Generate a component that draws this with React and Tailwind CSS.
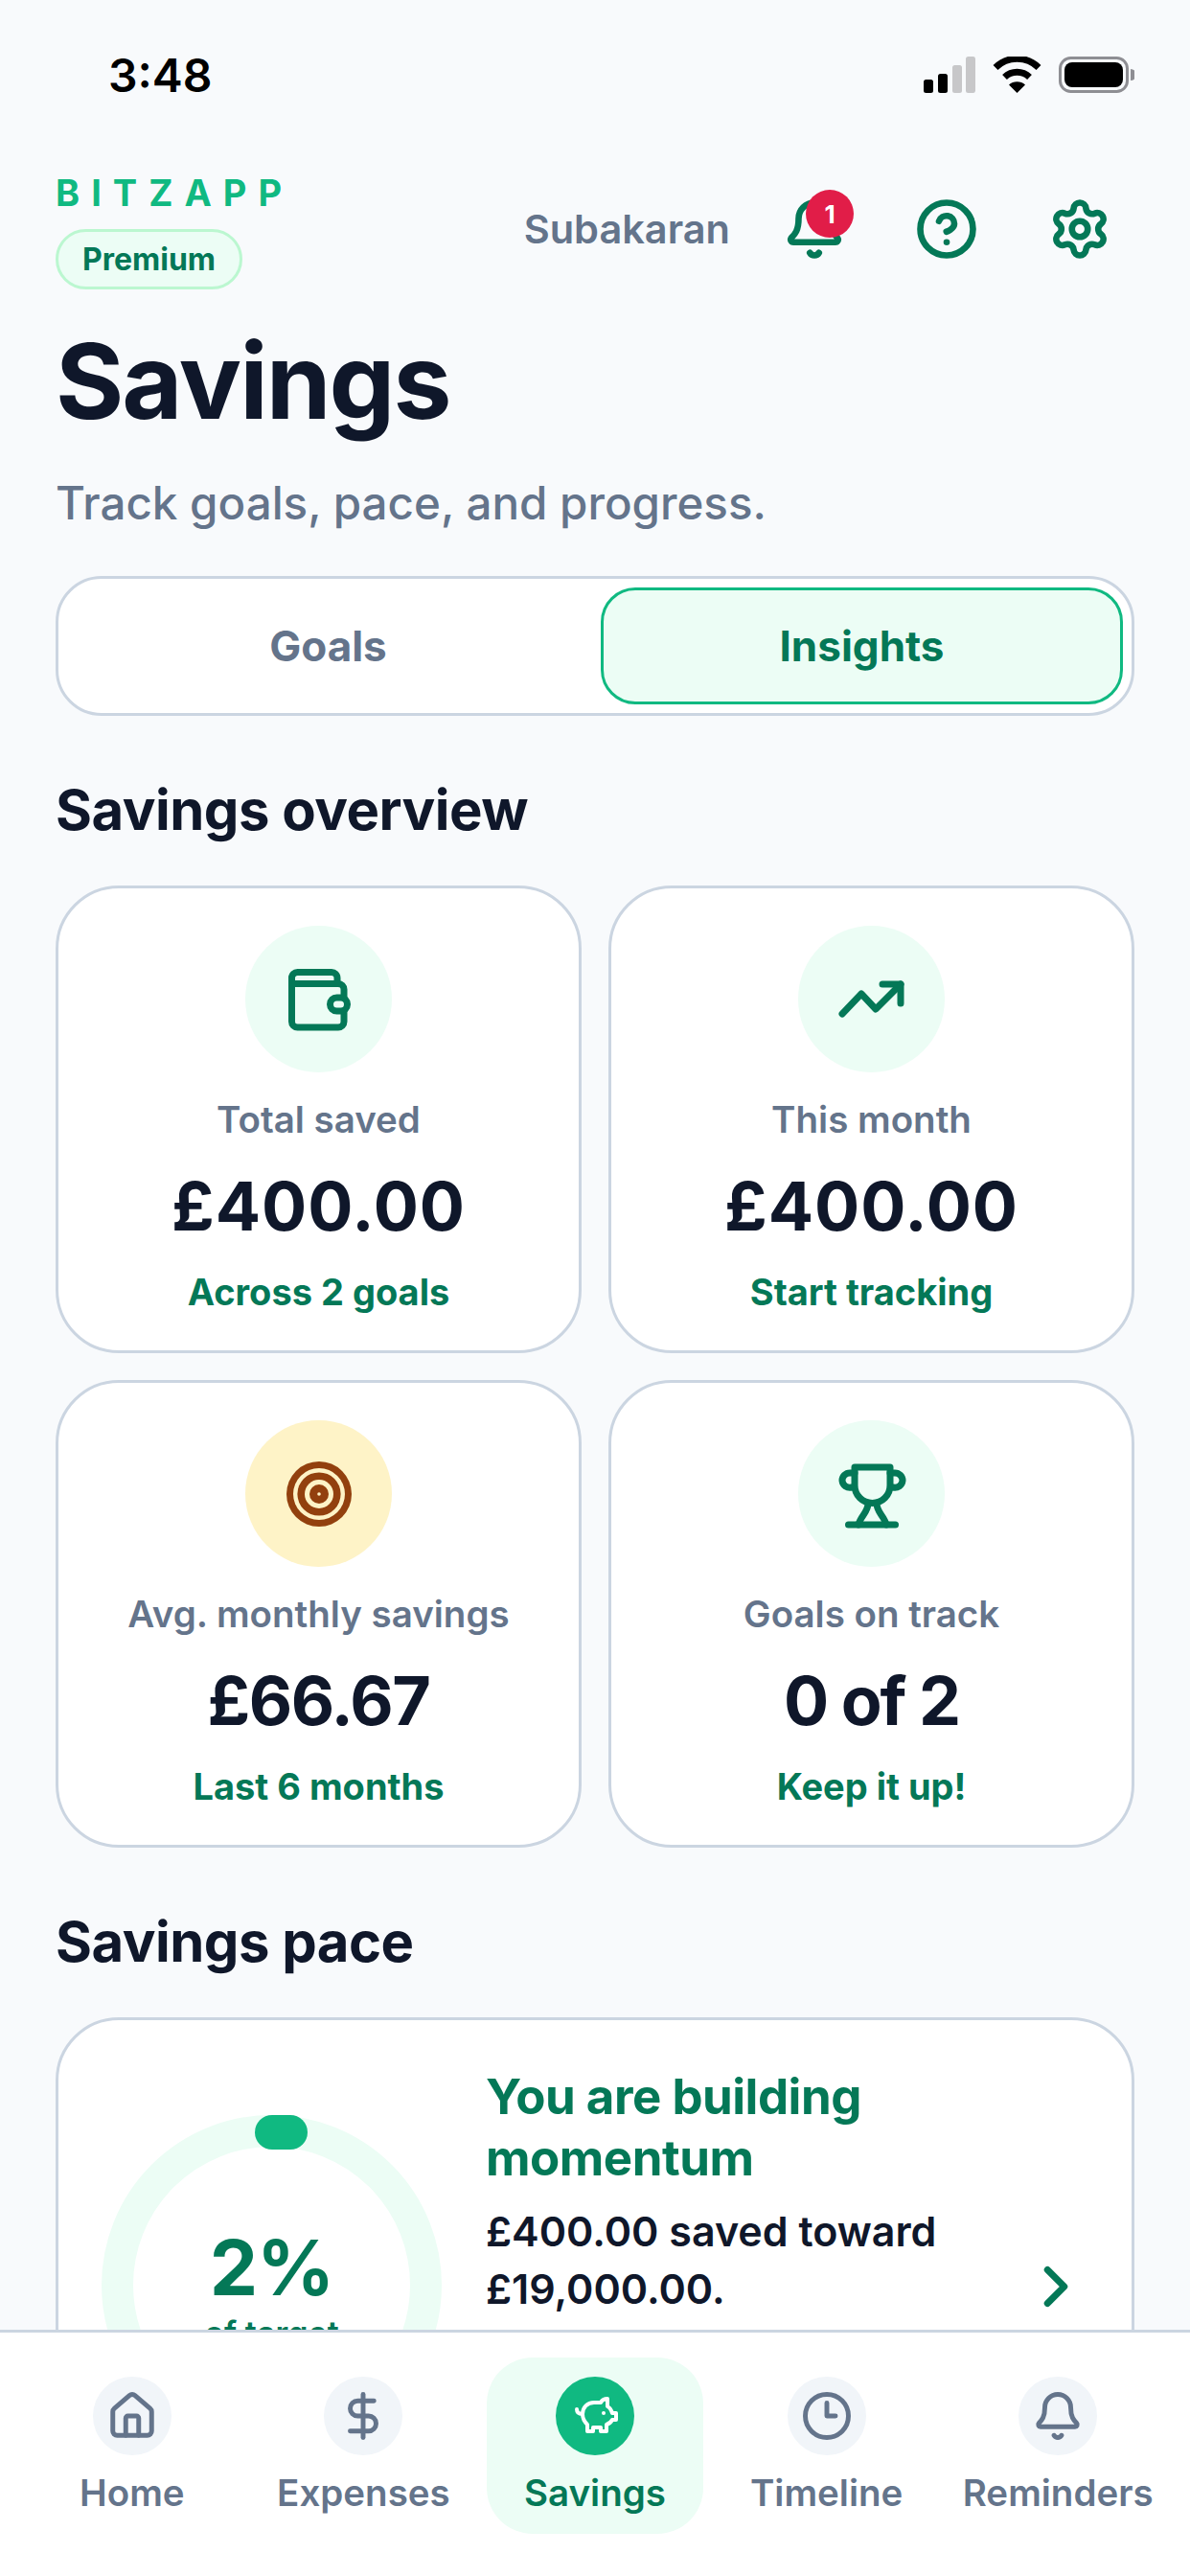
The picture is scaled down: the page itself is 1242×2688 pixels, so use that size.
import React from "react";
import { Bell, ChevronRight, CircleHelp, DollarSign, House, Settings } from "lucide-react";

const green = "#047857";

function Wallet() {
  return (
    <svg width="66" height="66" viewBox="0 0 66 66" fill="none" stroke={green} strokeWidth="7" strokeLinejoin="round" strokeLinecap="round">
      <path d="M4.5 16.5V10.5a6 6 0 0 1 6-6H46a6 6 0 0 1 6 6v6" />
      <path d="M4.5 16.5H53a6 6 0 0 1 6 6V31" />
      <path d="M59 45v11a6 6 0 0 1-6 6H10.5a6 6 0 0 1-6-6V10.5" />
      <rect x="44.5" y="31" width="18" height="14" rx="7" />
    </svg>
  );
}

function Trend() {
  return (
    <svg width="72" height="42" viewBox="0 0 72 42" fill="none" stroke={green} strokeWidth="7" strokeLinejoin="round" strokeLinecap="round">
      <path d="M5 36 25 15l15 16L66 5" />
      <path d="M47 5h19v20" />
    </svg>
  );
}

function Cup() {
  return (
    <svg width="76" height="76" viewBox="10 9 76 76" fill="none" stroke={green} strokeWidth="7" strokeLinejoin="round" strokeLinecap="round">
      <path d="M30 19h37v19a18.5 18.5 0 0 1-37 0z" />
      <path d="M30 25h-5a8 8 0 0 0-8 8 8 8 0 0 0 10 7" />
      <path d="M67 25h5a8 8 0 0 1 8 8 8 8 0 0 1-10 7" />
      <path d="M44 57c0 9-8 13-10 22" />
      <path d="M53 57c0 9 8 13 10 22" />
      <path d="M23.5 79h49" />
    </svg>
  );
}

function Target() {
  return (
    <svg width="68" height="68" viewBox="0 0 68 68">
      <circle cx="34" cy="34" r="34" fill="#92400e" />
      <circle cx="34" cy="34" r="27" fill="#fef3c7" />
      <circle cx="34" cy="34" r="22.6" fill="#92400e" />
      <circle cx="34" cy="34" r="15" fill="#fef3c7" />
      <circle cx="34" cy="34" r="10" fill="#92400e" />
      <circle cx="34" cy="34" r="1.8" fill="#fef3c7" />
    </svg>
  );
}

function Piggy() {
  return (
    <svg width="50" height="50" viewBox="25 25 50 50" fill="none" stroke="#fff" strokeWidth="4" strokeLinecap="round" strokeLinejoin="round">
      <path d="M42 66h6v-4h8v4h6v-7c3-1 5-3 6-5h4v-7h-4c-1-3-3-6-5-7v-8c-3 0-6 2-7 4H49c-7 0-12 5-12 12 0 5 2 8 5 11z" />
      <path d="M37 48c-4 0-6-2-6-5" />
      <circle cx="59" cy="47" r="2" fill="#fff" stroke="none" />
    </svg>
  );
}

function ClockIcon() {
  return (
    <svg width="54" height="54" viewBox="0 0 24 24" fill="none" stroke="currentColor" strokeWidth="2.2" strokeLinecap="round" strokeLinejoin="round">
      <circle cx="12" cy="12" r="10" />
      <path d="M12 6v6h4" />
    </svg>
  );
}

function StatCard({ icon, tint, label, value, note, valueClass }) {
  return (
    <div className="h-[488px] rounded-[66px] border-[3px] border-[#cbd5e1] bg-white flex flex-col items-center pt-[39px]">
      <div className={"w-[153px] h-[153px] rounded-full flex items-center justify-center " + tint}>{icon}</div>
      <div className="mt-[25px] text-[38.5px] leading-[48px] font-semibold text-[#64748b]">{label}</div>
      <div className={"mt-[22px] text-[70px] leading-[90px] font-bold text-[#0f172a] " + valueClass}>{value}</div>
      <div className="mt-[20px] text-[38px] leading-[48px] font-bold text-[#047857]">{note}</div>
    </div>
  );
}

function NavItem({ icon, label, active }) {
  return (
    <div className={"h-[184px] rounded-[48px] flex flex-col items-center pt-[20px] " + (active ? "bg-[#ecfdf5]" : "")}>
      <div className={"w-[82px] h-[82px] rounded-full flex items-center justify-center " + (active ? "bg-[#10b981]" : "bg-[#f1f5f9] text-[#64748b]")}>{icon}</div>
      <div className={"mt-[15px] text-[38.5px] leading-[48px] font-semibold whitespace-nowrap " + (active ? "text-[#047857]" : "text-[#64748b]")}>{label}</div>
    </div>
  );
}

export default function App() {
  return (
    <div className="w-[1242px] h-[2688px] overflow-hidden bg-[#f8fafc] flex flex-col font-['Inter',sans-serif]">
      <div className="flex-1 min-h-0 overflow-hidden">
        {/* status bar */}
        <div className="h-[178px] pt-[52px] pl-[113px] pr-[58px] flex justify-between items-start">
          <div className="text-[48px] leading-[54px] font-semibold text-black">3:48</div>
          <div className="flex items-center gap-[18px] pt-[7px]">
            <svg width="54" height="38" viewBox="0 0 54 38">
              <rect x="0" y="24" width="10" height="14" rx="2.5" fill="#000" />
              <rect x="15" y="18" width="10" height="20" rx="2.5" fill="#000" />
              <rect x="30" y="9" width="10" height="29" rx="2.5" fill="#c7c7c9" />
              <rect x="44" y="0" width="10" height="38" rx="2.5" fill="#c7c7c9" />
            </svg>
            <svg width="51" height="38" viewBox="0 0 51 38">
              <path d="M25.5 38 17 29.5a13 13 0 0 1 17 0z" fill="#000" />
              <path d="M12.5 21.5a19 19 0 0 1 26 0" fill="none" stroke="#000" strokeWidth="7" />
              <path d="M3 11.5a32 32 0 0 1 45 0" fill="none" stroke="#000" strokeWidth="7" />
            </svg>
            <svg width="79" height="38" viewBox="0 0 79 38">
              <rect x="1.5" y="1.5" width="70" height="35" rx="11" fill="none" stroke="#8e8e93" strokeWidth="3" />
              <rect x="6" y="6" width="61" height="26" rx="8" fill="#000" />
              <path d="M75 13a6 6 0 0 1 0 12z" fill="#8e8e93" />
            </svg>
          </div>
        </div>

        <div className="px-[58px]">
          {/* header */}
          <div className="flex justify-between items-start">
            <div className="flex flex-col items-start">
              <div className="text-[38px] leading-[46px] font-bold text-[#10b981] tracking-[12px]">BITZAPP</div>
              <div className="mt-[15px] h-[63px] w-[195px] rounded-full border-[3px] border-[#bbf7d0] bg-[#ecfdf5] flex items-center justify-center text-[32px] font-bold text-[#047857]">Premium</div>
            </div>
            <div className="flex items-center pt-[28px] text-[#047857]">
              <div className="mr-[55px] text-[41.5px] leading-[48px] font-semibold text-[#64748b]">Subakaran</div>
              <div className="relative w-[66px] h-[66px] mr-[72px]">
                <Bell size={66} strokeWidth={2.4} />
                <div className="absolute left-[24px] top-[-8px] w-[50px] h-[50px] rounded-full bg-[#e11d48] text-white text-[26px] font-bold flex items-center justify-center">1</div>
              </div>
              <div className="mr-[73px]"><CircleHelp size={66} strokeWidth={2.4} /></div>
              <div className="mr-[24px]"><Settings size={66} strokeWidth={2.4} /></div>
            </div>
          </div>

          <h1 className="mt-[30px] text-[109px] leading-[130px] font-bold text-[#0f172a] tracking-[-2px]">Savings</h1>
          <p className="mt-[35px] text-[47.5px] leading-[56px] font-medium text-[#64748b]">Track goals, pace, and progress.</p>

          {/* tabs */}
          <div className="mt-[48px] h-[146px] rounded-[48px] border-[3px] border-[#cbd5e1] bg-white grid grid-cols-2 gap-[12px] p-[9px] text-[44px] font-bold">
            <div className="rounded-[36px] flex items-center justify-center text-[#64748b]">Goals</div>
            <div className="rounded-[36px] border-[3px] border-[#10b981] bg-[#ecfdf5] flex items-center justify-center text-[#047857]">Insights</div>
          </div>

          <h2 className="mt-[62px] text-[58px] leading-[72px] font-bold text-[#0f172a] tracking-[-0.5px]">Savings overview</h2>

          <div className="mt-[43px] grid grid-cols-2 gap-[28px]">
            <StatCard tint="bg-[#ecfdf5]" icon={<Wallet />} label="Total saved" value="£400.00" valueClass="tracking-[1px]" note="Across 2 goals" />
            <StatCard tint="bg-[#ecfdf5]" icon={<Trend />} label="This month" value="£400.00" valueClass="tracking-[1px]" note="Start tracking" />
            <StatCard tint="bg-[#fef3c7]" icon={<Target />} label="Avg. monthly savings" value="£66.67" valueClass="tracking-[-1.5px]" note="Last 6 months" />
            <StatCard tint="bg-[#ecfdf5]" icon={<Cup />} label="Goals on track" value="0 of 2" valueClass="tracking-[-2px]" note="Keep it up!" />
          </div>

          <h2 className="mt-[62px] text-[58px] leading-[72px] font-bold text-[#0f172a] tracking-[-0.5px]">Savings pace</h2>

          {/* pace card, runs under the nav */}
          <div className="mt-[43px] h-[520px] rounded-[66px] border-[3px] border-[#cbd5e1] bg-white flex items-start pl-[45px] pr-[44px]">
            <div className="relative mt-[99px] w-[355px] h-[355px] shrink-0 rounded-full border-[33px] border-[#ecfdf5] flex flex-col items-center pt-[78px]">
              <div className="absolute top-[-33px] left-[127px] w-[55px] h-[36px] rounded-full bg-[#10b981]" />
              <div className="text-[80px] leading-[96px] font-bold text-[#047857] tracking-[-1px]">2%</div>
              <div className="mt-[1px] text-[34px] leading-[40px] font-semibold text-[#047857]">of target</div>
            </div>
            <div className="ml-[46px] pt-[48px] flex-1">
              <div className="text-[51px] leading-[64px] font-bold text-[#047857] tracking-[-0.5px]">You are building momentum</div>
              <div className="mt-[14px] text-[43px] leading-[60px] font-semibold text-[#0f172a] w-[500px]">£400.00 saved toward £19,000.00.</div>
            </div>
            <div className="mt-[243px] text-[#047857]"><ChevronRight size={70} strokeWidth={2.4} /></div>
          </div>
        </div>
      </div>

      {/* bottom nav */}
      <nav className="h-[257px] shrink-0 border-t-[3px] border-[#cbd5e1] bg-white grid grid-cols-5 gap-[16px] px-[25px] pt-[26px]">
        <NavItem icon={<House size={54} strokeWidth={2.2} />} label="Home" />
        <NavItem icon={<DollarSign size={54} strokeWidth={2.2} />} label="Expenses" />
        <NavItem active icon={<Piggy />} label="Savings" />
        <NavItem icon={<ClockIcon />} label="Timeline" />
        <NavItem icon={<Bell size={54} strokeWidth={2.2} />} label="Reminders" />
      </nav>
    </div>
  );
}
